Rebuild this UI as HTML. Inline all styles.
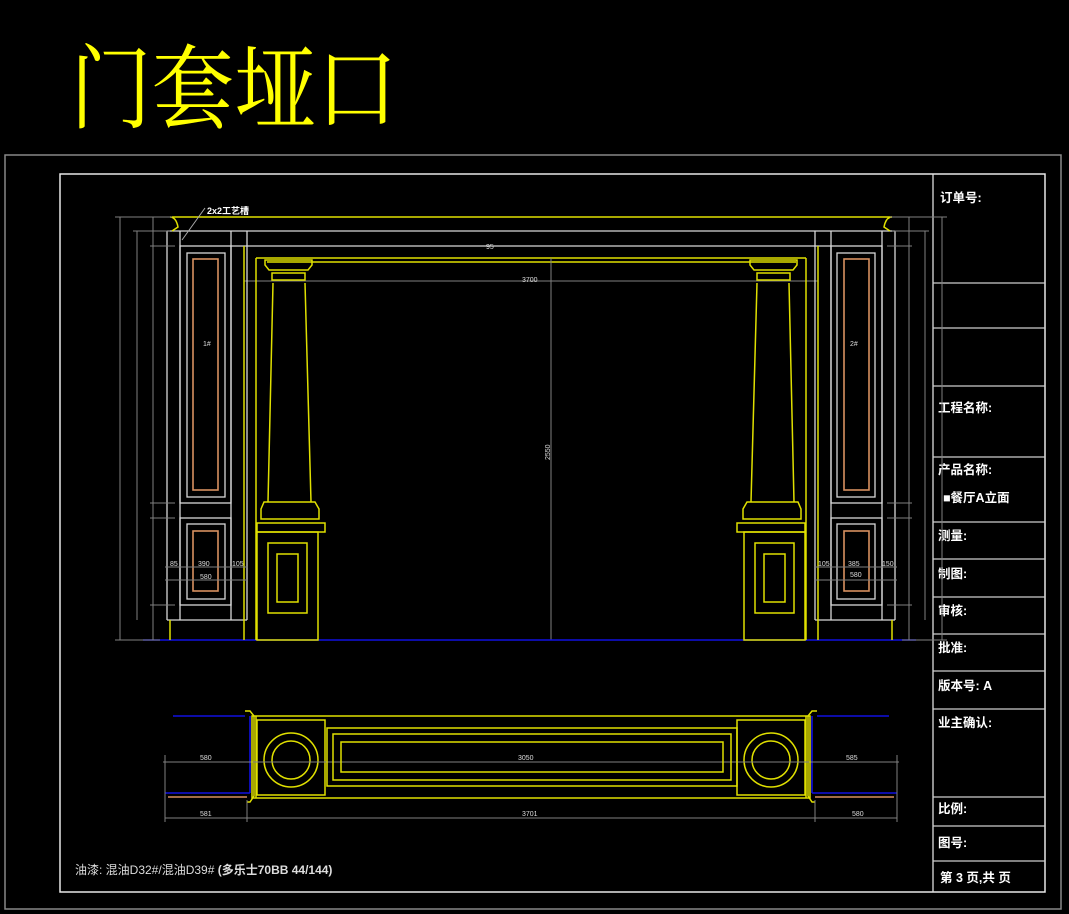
<!DOCTYPE html>
<html><head><meta charset="utf-8"><style>
html,body{margin:0;padding:0;background:#000;}
svg{display:block}
.w{stroke:#d8d8d8;fill:none;stroke-width:1.3}
.y{stroke:#e0e000;fill:none;stroke-width:1.5}
.g{stroke:#808080;fill:none;stroke-width:1}
.o{stroke:#d89060;fill:none;stroke-width:1.6}
.b{stroke:#1010e0;fill:none;stroke-width:1.6}
.t{font-family:"Liberation Sans","Noto Sans CJK SC",sans-serif;font-weight:bold;fill:#fff;font-size:12.5px}
.d{font-family:"Liberation Sans",sans-serif;fill:#ddd;font-size:7px}
</style></head><body>
<svg width="1069" height="914" viewBox="0 0 1069 914">
<rect x="0" y="0" width="1069" height="914" fill="#000"/>
<text x="70" y="121" textLength="328" lengthAdjust="spacingAndGlyphs" style="font-family:'Noto Serif CJK SC','Noto Sans CJK SC',serif;font-size:92px;fill:#ffff00">门套垭口</text>
<!-- frames -->
<rect x="5" y="155" width="1056" height="754" fill="none" stroke="#888" stroke-width="1.5"/>
<rect x="60" y="174" width="985" height="718" fill="none" stroke="#e8e8e8" stroke-width="1.5"/>
<line x1="933" y1="174" x2="933" y2="892" stroke="#ddd" stroke-width="1.3"/>
<g stroke="#ccc" stroke-width="1.3">
<line x1="933" y1="283" x2="1045" y2="283"/><line x1="933" y1="328" x2="1045" y2="328"/>
<line x1="933" y1="386" x2="1045" y2="386"/><line x1="933" y1="457" x2="1045" y2="457"/>
<line x1="933" y1="522" x2="1045" y2="522"/><line x1="933" y1="559" x2="1045" y2="559"/>
<line x1="933" y1="597" x2="1045" y2="597"/><line x1="933" y1="634" x2="1045" y2="634"/>
<line x1="933" y1="671" x2="1045" y2="671"/><line x1="933" y1="709" x2="1045" y2="709"/>
<line x1="933" y1="797" x2="1045" y2="797"/><line x1="933" y1="826" x2="1045" y2="826"/>
<line x1="933" y1="861" x2="1045" y2="861"/>
</g>
<g class="t">
<text x="940" y="202">订单号:</text>
<text x="938" y="412">工程名称:</text>
<text x="938" y="474">产品名称:</text>
<text x="943" y="502">■餐厅A立面</text>
<text x="938" y="540">测量:</text>
<text x="938" y="578">制图:</text>
<text x="938" y="615">审核:</text>
<text x="938" y="652">批准:</text>
<text x="938" y="690">版本号: A</text>
<text x="938" y="727">业主确认:</text>
<text x="938" y="813">比例:</text>
<text x="938" y="847">图号:</text>
<text x="940" y="882">第 3 页,共  页</text>
</g>
<text x="75" y="874" style="font-family:'Liberation Sans','Noto Sans CJK SC',sans-serif;font-size:12px;fill:#ddd">油漆: 混油D32#/混油D39# <tspan font-weight="bold">(多乐士70BB 44/144)</tspan></text>

<!-- elevation: shared top -->
<line class="y" x1="172" y1="217" x2="892" y2="217"/>
<line class="w" x1="167" y1="231" x2="895" y2="231"/>
<line class="w" x1="231" y1="246" x2="831" y2="246"/>
<line class="y" x1="256" y1="258" x2="806" y2="258"/>
<line class="y" x1="267" y1="262" x2="796" y2="262"/>
<line class="g" x1="244" y1="281" x2="818" y2="281"/>
<line class="g" x1="551" y1="258" x2="551" y2="640"/>
<text class="d" x="522" y="282">3700</text>
<text class="d" x="486" y="249">95</text>
<text class="d" transform="translate(550,460) rotate(-90)">2550</text>
<line class="b" x1="143" y1="640" x2="916" y2="640"/>
<text x="207" y="214" style="font-family:'Liberation Sans','Noto Sans CJK SC',sans-serif;font-size:9px;font-weight:bold;fill:#fff">2x2工艺槽</text>
<line x1="205" y1="208" x2="182" y2="240" stroke="#aaa"/>

<g id="half">
<!-- pilaster -->
<line class="w" x1="167" y1="231" x2="167" y2="620"/>
<line class="w" x1="180" y1="231" x2="180" y2="620"/>
<line class="w" x1="231" y1="231" x2="231" y2="620"/>
<line class="w" x1="247" y1="231" x2="247" y2="620"/>
<line class="w" x1="167" y1="620" x2="247" y2="620"/>
<rect class="w" x="180" y="246" width="51" height="257"/>
<rect class="w" x="187" y="253" width="38" height="244"/>
<rect class="o" x="193" y="259" width="25" height="231"/>
<rect class="w" x="180" y="518" width="51" height="87"/>
<rect class="w" x="187" y="524" width="38" height="75"/>
<rect class="o" x="193" y="531" width="25" height="60"/>
<line class="y" x1="170" y1="620" x2="170" y2="640"/>
<path class="y" d="M170 217 q6 0 8 10 l-6 4"/>
<!-- door frame -->
<line class="y" x1="244" y1="246" x2="244" y2="640"/>
<line class="y" x1="256" y1="258" x2="256" y2="640"/>
<!-- column -->
<path class="y" d="M265 260 h47 v5 l-4 5 h-39 l-4 -5 z M272 273 h33 v7 h-33 z M273 283 L268 502 M305 283 L311 502"/>
<path class="y" d="M264 502 h51 l4 7 v10 h-58 v-10 z M257 523 h68 v9 h-68 z"/>
<rect class="y" x="257" y="532" width="61" height="108"/>
<rect class="y" x="268" y="543" width="39" height="70"/>
<rect class="y" x="277" y="554" width="21" height="48"/>
<!-- dims -->
<line class="g" x1="120" y1="217" x2="120" y2="640"/>
<line class="g" x1="137" y1="231" x2="137" y2="620"/>
<line class="g" x1="153" y1="217" x2="153" y2="640"/>
<line class="g" x1="115" y1="217" x2="172" y2="217"/>
<line class="g" x1="133" y1="231" x2="170" y2="231"/>
<line class="g" x1="150" y1="246" x2="175" y2="246"/>
<line class="g" x1="150" y1="503" x2="175" y2="503"/>
<line class="g" x1="150" y1="518" x2="175" y2="518"/>
<line class="g" x1="150" y1="605" x2="175" y2="605"/>
<line class="g" x1="115" y1="640" x2="160" y2="640"/>
<line class="g" x1="165" y1="567" x2="248" y2="567"/>
<line class="g" x1="165" y1="580" x2="248" y2="580"/>
<!-- plan -->
<line class="b" x1="173" y1="716" x2="245" y2="716"/>
<line class="b" x1="165" y1="793" x2="250" y2="793"/>
<line class="b" x1="250" y1="716" x2="250" y2="793"/>
<line class="o" x1="168" y1="797" x2="247" y2="797"/>
<path class="y" d="M245 711 h5 l4 5 v80 l-4 6 h-3"/>
<line class="y" x1="256" y1="716" x2="256" y2="798"/>
<rect class="y" x="257" y="720" width="68" height="75"/>
<circle class="y" cx="291" cy="760" r="27"/>
<circle class="y" cx="291" cy="760" r="19"/>
<line class="g" x1="163" y1="762" x2="531" y2="762"/>
<line class="g" x1="165" y1="818" x2="531" y2="818"/>
<line class="g" x1="165" y1="755" x2="165" y2="822"/>
<line class="g" x1="247" y1="800" x2="247" y2="822"/>
</g>
<use href="#half" transform="translate(1062,0) scale(-1,1)"/>
<!-- plan center -->
<rect class="y" x="252" y="716" width="558" height="82"/>
<rect class="y" x="327" y="728" width="410" height="58"/>
<rect class="y" x="333" y="734" width="398" height="46"/>
<rect class="y" x="341" y="742" width="382" height="30"/>
<g class="d">
<text x="200" y="760">580</text><text x="518" y="760">3050</text><text x="846" y="760">585</text>
<text x="200" y="816">581</text><text x="522" y="816">3701</text><text x="852" y="816">580</text>
<text x="203" y="346">1#</text><text x="850" y="346">2#</text>
<text x="170" y="566">85</text><text x="198" y="566">390</text><text x="232" y="566">105</text>
<text x="200" y="579">580</text>
<text x="818" y="566">105</text><text x="848" y="566">385</text><text x="882" y="566">150</text>
<text x="850" y="577">580</text>
</g>
</svg>
</body></html>
